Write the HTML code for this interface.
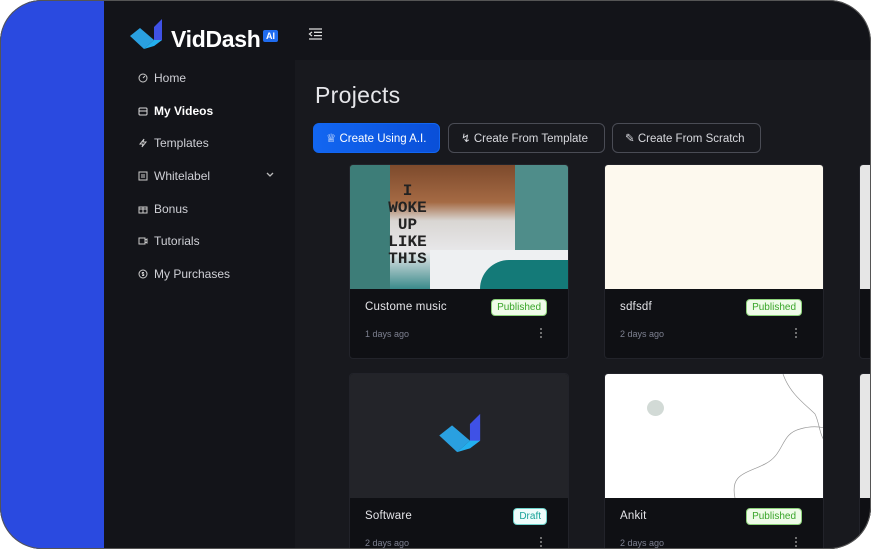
<!DOCTYPE html>
<html><head><meta charset="utf-8"><style>
*{box-sizing:border-box;margin:0;padding:0}
body{width:872px;height:550px;background:#fff;font-family:"Liberation Sans",sans-serif;overflow:hidden;position:relative}
.frame{position:absolute;left:0;top:0;width:871px;height:549px;border-radius:42px;overflow:hidden;background:#131419}
.ring{position:absolute;left:0;top:0;width:871px;height:549px;border:1.5px solid #555;border-radius:42px;z-index:9}
.blue{position:absolute;left:0;top:0;width:104px;height:100%;background:#2a4ae0}
.side{position:absolute;left:104px;top:0;width:191px;height:100%;background:#131419}
.main{position:absolute;left:295px;top:60px;right:0;bottom:0;background:#18191e}
.nav{position:absolute;left:138px;color:#cfd0d6;font-size:12px;display:flex;align-items:center;gap:6px}
.nav svg{width:10px;height:10px}
.nav.act{color:#fff;font-weight:bold}
h1{position:absolute;left:315px;top:82px;color:#e6e6ea;font-size:23px;font-weight:normal;letter-spacing:.3px}
.btn{position:absolute;top:123px;height:30px;border-radius:6px;border:1px solid #4a4c55;color:#d8d9de;font-size:11.5px;display:flex;align-items:center;padding-left:12px;gap:6px}
.card{position:absolute;width:220px;background:#0f1014;border:1px solid #22232a;border-radius:4px;overflow:hidden}
.thumb{height:124px;position:relative;overflow:hidden}
.ttl{position:absolute;left:15px;top:136px;color:#e4e4e8;font-size:11.5px;letter-spacing:.2px}
.badge{position:absolute;right:21px;top:134px;font-size:10px;padding:2px 5px;border-radius:4px;background:#effbe8;color:#3aa52a;border:1px solid #8cd27a}
.date{position:absolute;left:15px;top:164px;color:#7d8090;font-size:9px}
.dots{position:absolute;right:26px;top:162px;width:2px;height:12px;background:radial-gradient(circle,#777 1px,transparent 1.2px) 0 0/2px 4px}
</style></head><body>
<div class="frame">
<div class="blue"></div>
<div class="side"></div>
<div class="main"></div>
<svg style="position:absolute;left:129px;top:18px" width="36" height="32" viewBox="0 0 36 32"><path d="M1 18 L11 10 L25 22 L15 31 Z" fill="#2aa0e0"/><path d="M25 9 L33 1 L33 22 L25 28 Z" fill="#3f51e6"/><path d="M15 31 L25 22 L33 22 L25 28Z" fill="#23b0ee"/></svg>
<div style="position:absolute;left:171px;top:26px;color:#fff;font-size:23px;font-weight:bold;letter-spacing:-.3px">VidDash</div>
<div style="position:absolute;left:263px;top:30px;background:#1f6cf0;color:#fff;font-size:9px;font-weight:bold;padding:1px 3px;border-radius:2px">AI</div>
<svg style="position:absolute;left:308px;top:28px" width="15" height="12" viewBox="0 0 15 12" stroke="#ddd" stroke-width="1.3"><path d="M1 1H14M6 4.3H14M6 7.6H14M1 11H14M4 4L1.5 6L4 8"/></svg>
<div class="nav" style="top:71px"><svg viewBox="0 0 10 10" fill="none" stroke="#ccc"><circle cx="5" cy="5" r="4"/><path d="M5 5L7 3"/></svg>Home</div>
<div class="nav act" style="top:104px"><svg viewBox="0 0 10 10" fill="none" stroke="#ddd"><rect x="1" y="2" width="8" height="7" rx="1"/><path d="M1 5H9"/></svg>My Videos</div>
<div class="nav" style="top:136px"><svg viewBox="0 0 10 10" fill="none" stroke="#ccc"><path d="M6 1L2 6H5L4 9L8 4H5Z"/></svg>Templates</div>
<div class="nav" style="top:169px"><svg viewBox="0 0 10 10" fill="none" stroke="#ccc"><rect x="1" y="1" width="8" height="8"/><path d="M4 3V7M6 3V7"/></svg>Whitelabel</div>
<svg style="position:absolute;left:266px;top:172px" width="8" height="6" viewBox="0 0 8 6" fill="none" stroke="#bbb" stroke-width="1.3"><path d="M1 1L4 4L7 1"/></svg>
<div class="nav" style="top:202px"><svg viewBox="0 0 10 10" fill="none" stroke="#ccc"><rect x="1" y="3" width="8" height="6"/><path d="M5 3V9M1 5H9"/></svg>Bonus</div>
<div class="nav" style="top:234px"><svg viewBox="0 0 10 10" fill="none" stroke="#ccc"><rect x="1" y="2" width="6" height="6"/><path d="M7 4L9 3V7L7 6"/></svg>Tutorials</div>
<div class="nav" style="top:267px"><svg viewBox="0 0 10 10" fill="none" stroke="#ccc"><circle cx="5" cy="5" r="4"/><path d="M6 3.5H4.3V5H5.7V6.5H4"/></svg>My Purchases</div>
<h1>Projects</h1>
<div class="btn" style="left:313px;width:127px;background:linear-gradient(90deg,#1266f1,#0a4fd8);border-color:#1266f1;color:#fff">&#9813; Create Using A.I.</div>
<div class="btn" style="left:448px;width:157px">&#8623; Create From Template</div>
<div class="btn" style="left:612px;width:149px">&#9998; Create From Scratch</div>

<div class="card" style="left:349px;top:164px;height:195px"><div class="thumb" style="background:linear-gradient(180deg,#7d4a2c 0,#a56a44 30%,#d9d6d3 45%,#e8e8ea 70%,#3a8a8a 100%)">
<div style="position:absolute;left:0;top:0;width:40px;height:124px;background:#3d7d78"></div>
<div style="position:absolute;left:165px;top:0;width:55px;height:124px;background:#4f8d8a"></div>
<div style="position:absolute;left:80px;top:85px;width:140px;height:40px;background:#eef0f2"></div>
<div style="position:absolute;left:130px;top:95px;width:90px;height:29px;background:#147a78;border-radius:30px 0 0 0"></div>
<div style="position:absolute;left:20px;top:18px;font:bold 16px 'Liberation Mono',monospace;color:#222;line-height:17px;text-align:center;width:75px">I<br>WOKE<br>UP<br>LIKE<br>THIS</div></div>
<div class="ttl">Custome music</div><div class="badge">Published</div><div class="date">1 days ago</div><div class="dots"></div></div>

<div class="card" style="left:604px;top:164px;height:195px"><div class="thumb" style="background:#fdf9ee"></div>
<div class="ttl">sdfsdf</div><div class="badge">Published</div><div class="date">2 days ago</div><div class="dots"></div></div>

<div class="card" style="left:859px;top:164px;height:195px"><div class="thumb" style="background:#e6e6e6"></div></div>

<div class="card" style="left:349px;top:373px;height:200px"><div class="thumb" style="background:#232429">
<svg style="position:absolute;left:88px;top:38px" width="46" height="42" viewBox="0 0 36 32"><path d="M1 18 L11 10 L25 22 L15 31 Z" fill="#2aa0e0"/><path d="M25 9 L33 1 L33 22 L25 28 Z" fill="#3f51e6"/><path d="M15 31 L25 22 L33 22 L25 28Z" fill="#23b0ee"/></svg></div>
<div class="ttl">Software</div><div class="badge" style="background:#eefcfb;color:#1aa39a;border-color:#6fd3cc">Draft</div><div class="date">2 days ago</div><div class="dots"></div></div>

<div class="card" style="left:604px;top:373px;height:200px"><div class="thumb" style="background:#fff">
<div style="position:absolute;left:42px;top:26px;width:17px;height:16px;border-radius:50%;background:#d2dad6"></div>
<svg style="position:absolute;left:0;top:0" width="220" height="124" fill="none" stroke="#999" stroke-width=".7"><path d="M178 0C185 20 200 30 210 40C215 50 214 62 222 70"/><path d="M130 124C125 100 140 100 160 90C180 80 175 60 195 55C205 52 215 52 222 55"/></svg></div>
<div class="ttl">Ankit</div><div class="badge">Published</div><div class="date">2 days ago</div><div class="dots"></div></div>

<div class="card" style="left:859px;top:373px;height:200px"><div class="thumb" style="background:#e6e6e6"></div></div>
</div>
<div class="ring"></div>
</body></html>
